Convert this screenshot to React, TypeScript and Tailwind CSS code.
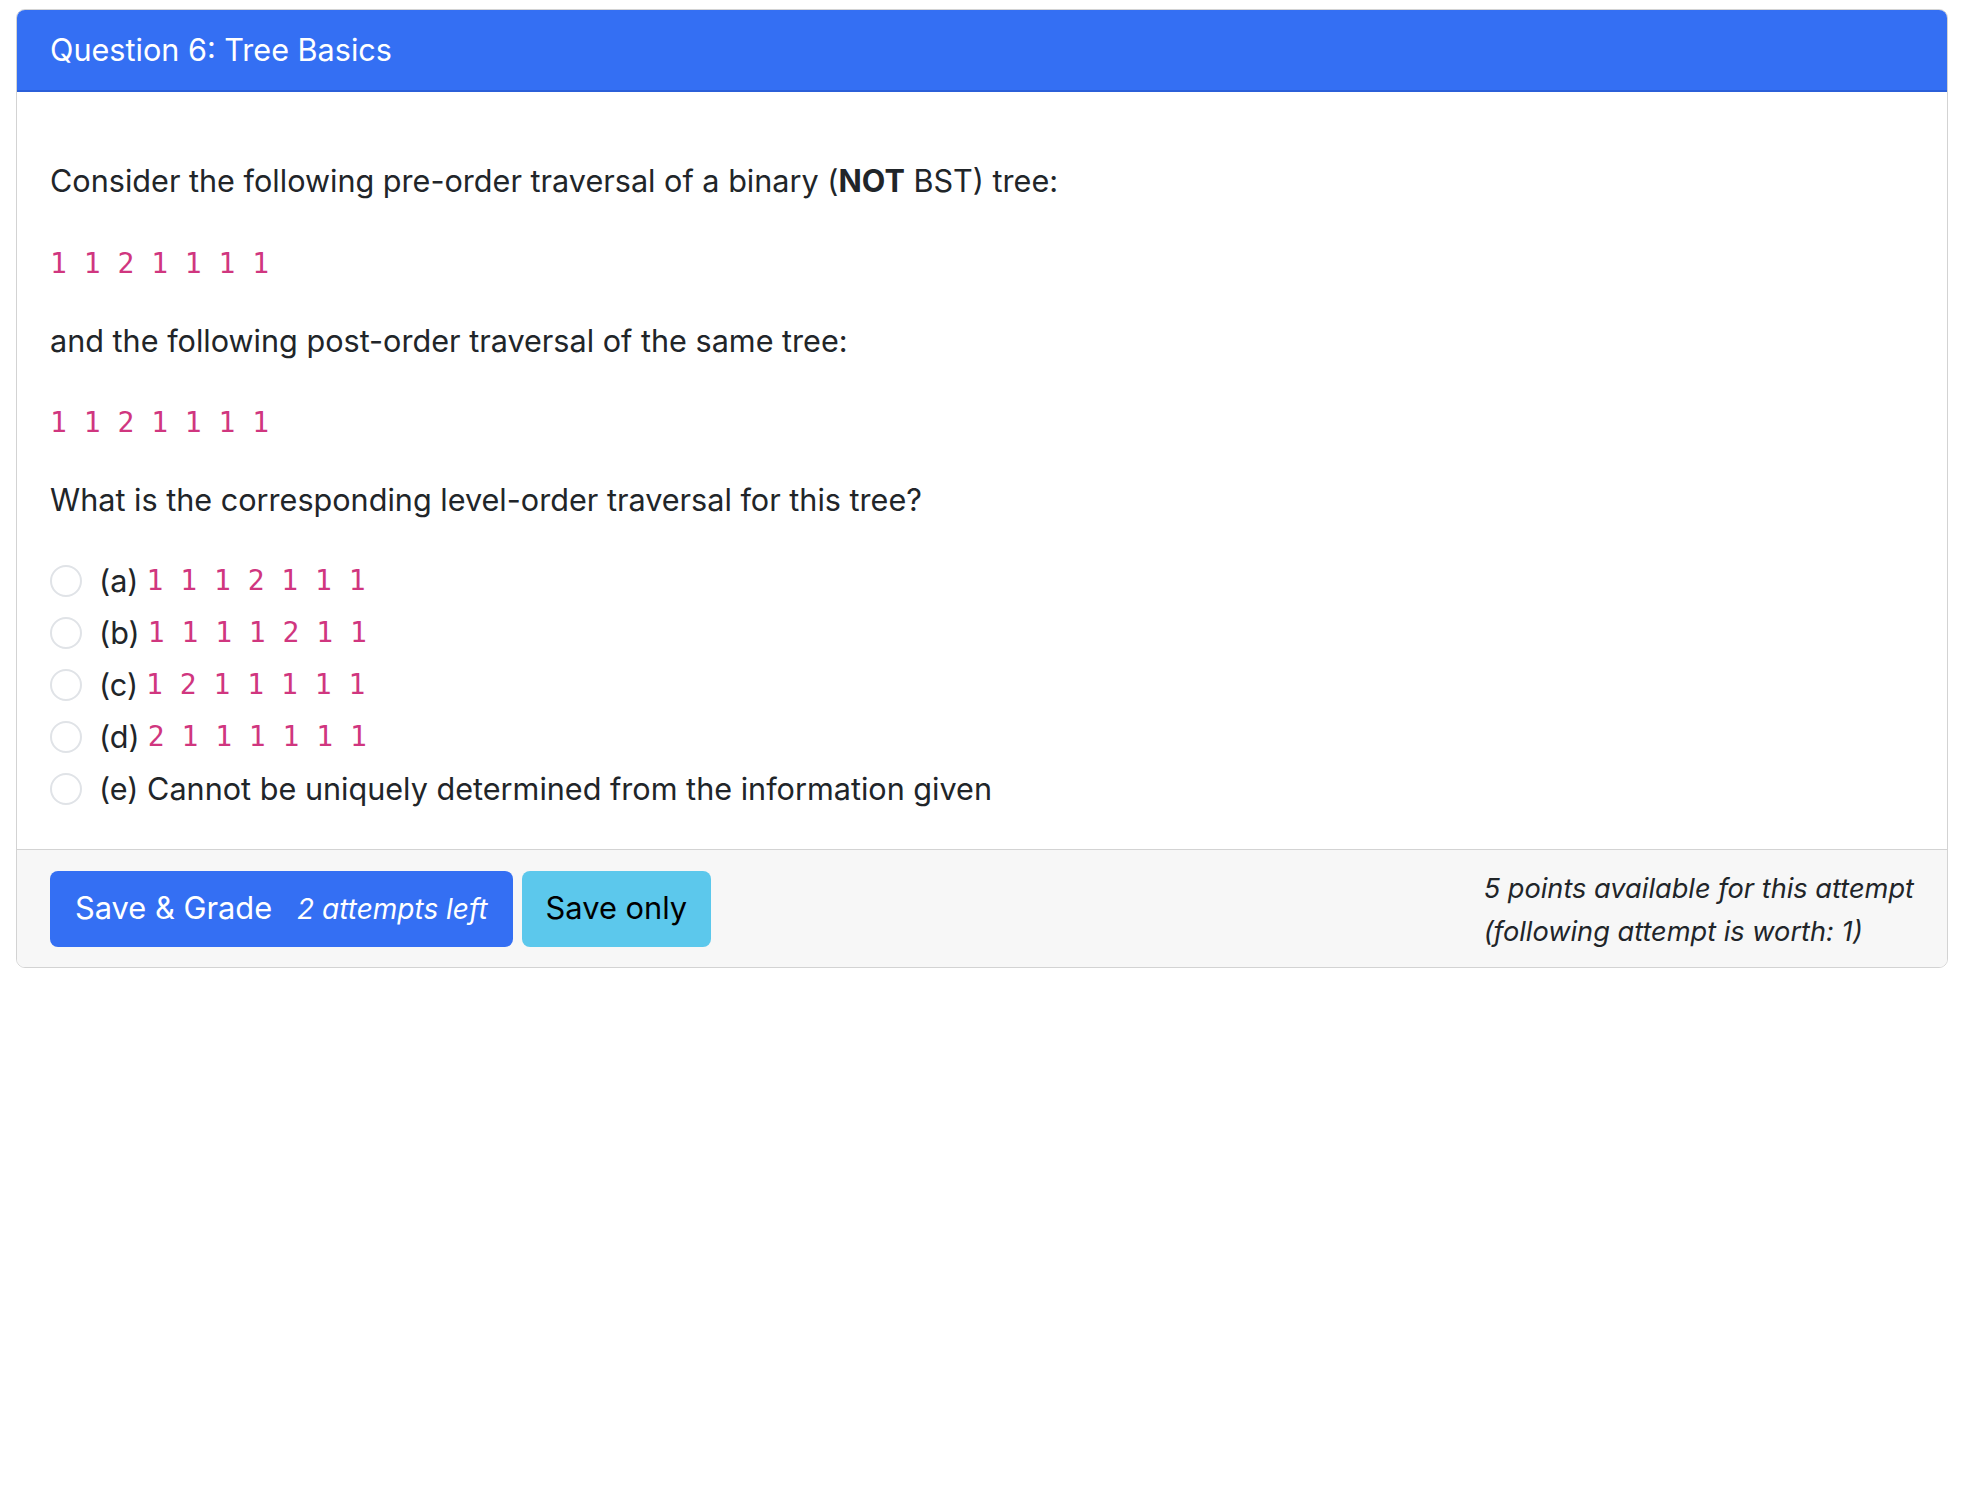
const options = [
  { label: "(a)", seq: "1 1 1 2 1 1 1" },
  { label: "(b)", seq: "1 1 1 1 2 1 1" },
  { label: "(c)", seq: "1 2 1 1 1 1 1" },
  { label: "(d)", seq: "2 1 1 1 1 1 1" },
];

const sans = "font-['Inter','Liberation_Sans',sans-serif]";
const mono = "font-['DejaVu_Sans_Mono','Liberation_Mono',monospace]";

const Code = ({ children }: { children: string }) => (
  <code className={`${mono} text-[28px] leading-[40px] text-[#d0367f] whitespace-pre`}>{children}</code>
);

const Radio = () => (
  <span className="w-[32px] h-[32px] rounded-full border-2 border-[#e0e3e7] bg-white flex-shrink-0" />
);

export default function App() {
  return (
    <div className={`bg-white min-h-screen pt-[9px] pl-4 text-[#212529] ${sans}`}>
      <div className="w-[1932px] border border-[#d3d3d3] rounded-[9px] overflow-hidden">
        {/* Header */}
        <div className="h-[82px] bg-[#346ff3] border-b-2 border-[#2b5fd9] px-[33px] flex items-center">
          <h2 className="text-white text-[30.6px]">Question 6: Tree Basics</h2>
        </div>

        {/* Body */}
        <div className="px-[33px] pt-[69px] pb-[34px] text-[30.6px]">
          <p className="h-[40px] leading-[40px] mb-[40.5px]">
            Consider the following pre-order traversal of a binary (<b>NOT</b> BST) tree:
          </p>
          <div className="h-[40px] pt-[4px] flex items-center mb-[39px]">
            <Code>1 1 2 1 1 1 1</Code>
          </div>
          <p className="h-[40px] leading-[40px] mb-[40.5px]">and the following post-order traversal of the same tree:</p>
          <div className="h-[40px] pt-[4px] flex items-center mb-[39px]">
            <Code>1 1 2 1 1 1 1</Code>
          </div>
          <p className="h-[40px] leading-[40px] mb-[35px]">What is the corresponding level-order traversal for this tree?</p>

          <div className="flex flex-col">
            {options.map((o) => (
              <label key={o.label} className="h-[52px] flex items-center gap-[17px]">
                <Radio />
                <span className="flex items-center gap-[8px] h-[40px]">
                  <span className="leading-[40px]">{o.label}</span>
                  <Code>{o.seq}</Code>
                </span>
              </label>
            ))}
            <label className="h-[52px] flex items-center gap-[17px]">
              <Radio />
              <span className="leading-[40px]">(e) Cannot be uniquely determined from the information given</span>
            </label>
          </div>
        </div>

        {/* Footer */}
        <div className="h-[118px] border-t border-[#d3d3d3] bg-[#f7f7f7] px-[33px] flex items-center">
          <button className="h-[76px] px-[25px] rounded-[8px] bg-[#346ff3] text-white flex items-center gap-[25px]">
            <span className="text-[30.8px]">Save &amp; Grade</span>
            <span className="text-[28px] italic">2 attempts left</span>
          </button>
          <button className="ml-[9px] h-[76px] px-[24px] rounded-[8px] bg-[#5cc8ec] text-black text-[30.8px]">
            Save only
          </button>
          <div className="ml-auto pt-[2px] text-[27.2px] italic leading-[43px]">
            <div>5 points available for this attempt</div>
            <div>(following attempt is worth: 1)</div>
          </div>
        </div>
      </div>
    </div>
  );
}
